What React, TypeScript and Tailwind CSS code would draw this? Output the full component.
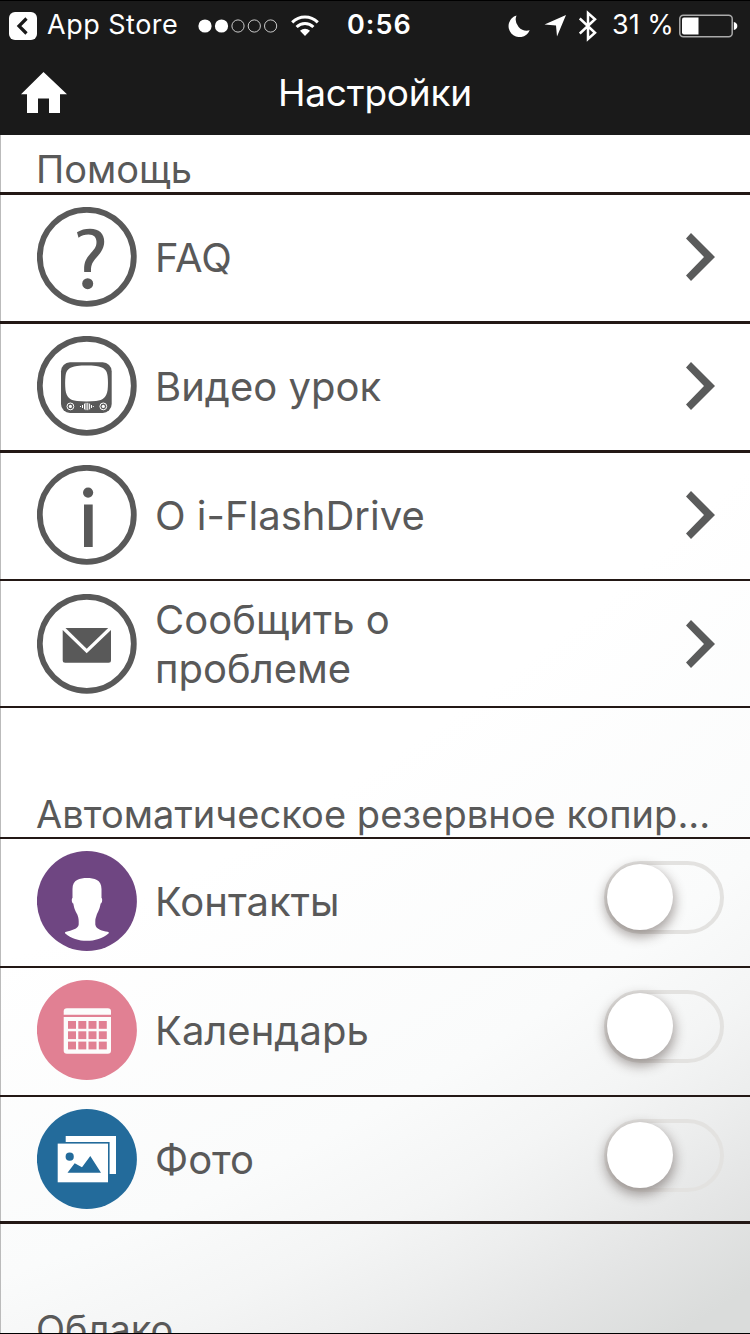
import type { ReactNode } from "react";

const DARK = "#595959";

function Ring({ children }: { children: ReactNode }) {
  return (
    <svg width="100" height="100" viewBox="0 0 100 100" className="shrink-0">
      <circle cx="49.8" cy="49.8" r="47" fill="none" stroke={DARK} strokeWidth="5.8" />
      {children}
    </svg>
  );
}

function Disc({ color, children }: { color: string; children: ReactNode }) {
  return (
    <svg width="100" height="100" viewBox="0 0 100 100" className="shrink-0">
      <circle cx="49.9" cy="50" r="50" fill={color} />
      {children}
    </svg>
  );
}

function FaqIcon() {
  return (
    <Ring>
      <path
        d="M40 25.2C44 22.7 48 21.700 53 21.700C62.500 21.700 67.200 27 67.200 34.500C67.200 41.500 63.500 46 59.500 50.500C55.500 55 53.700 58 54 65H47.200C46.700 56.500 48.500 52.500 52.500 47.800C56.500 43 59.500 40.500 59.500 35C59.500 30.500 57 27.500 51.500 27.500C47.500 27.500 44.500 28.500 41.500 30.700Z"
        fill={DARK}
      />
      <circle cx="50.7" cy="76.7" r="5.5" fill={DARK} />
    </Ring>
  );
}

function VideoIcon() {
  return (
    <Ring>
      <rect x="24" y="26.3" width="50.7" height="50.7" rx="9" fill={DARK} />
      <path
        d="M40 30C46 29.400 53 29.400 59 30C67 31 70 34 70.600 40C71.100 45 71.100 49 70.600 54C69.500 61 66.500 64.300 59 65C53 65.500 46 65.500 40 65C32.500 64.300 29.500 61 28.500 54C28 49 28 45 28.500 40C29.200 34 32 31 40 30Z"
        fill="#fff"
      />
      {[33.4, 66.3].map((x) => (
        <g key={x}>
          <circle cx={x} cy="70.4" r="3.4" fill="none" stroke="#fff" strokeWidth="1" />
          <circle cx={x} cy="70.4" r="1.6" fill="#fff" />
        </g>
      ))}
      <path
        d="M43.500 70v1M45.500 69v3M47.500 67.600v5.800M49 66.800v7.400M50.800 66.800v7.400M52.600 67.600v5.800M54.500 69v3M56.300 70v1"
        stroke="#fff"
        strokeWidth="1"
      />
    </Ring>
  );
}

function InfoIcon() {
  return (
    <Ring>
      <circle cx="51.1" cy="27.6" r="5.1" fill={DARK} />
      <rect x="47" y="39.500" width="8.700" height="42.500" fill={DARK} />
    </Ring>
  );
}

function MailIcon() {
  return (
    <Ring>
      <path d="M28.500 34H71.200L49.700 54.800Z" fill={DARK} />
      <path
        d="M25.700 36L49.700 59.300L74 36V66.200Q74 68.700 71.500 68.700H28.200Q25.700 68.700 25.700 66.200Z"
        fill={DARK}
      />
    </Ring>
  );
}

function ContactsIcon() {
  return (
    <Disc color="#6f4682">
      <path
        d="M50 27C57 27 64.500 28.500 64.500 38V47C65.600 47.500 65.400 52 63.700 52.500C62.500 58.500 61 61 59.800 63.500C59.200 66 58.300 67.500 58.300 70V73.500C59 78.500 66 80 70.500 80.700C72 81 72.200 82 71.500 82.500C60 92.300 39.500 92.300 28.300 82.500C27.500 81.800 28 81 29.300 80.700C34 79.500 41.500 78 41.700 73.500V70C41.700 67.500 41 65.500 40.300 63.500C39 61 37.300 58.500 36.300 52.500C34.600 52 34.400 47.500 35.500 47V38C35.500 28.500 43 27 50 27Z"
        fill="#fff"
      />
    </Disc>
  );
}

function CalendarIcon() {
  return (
    <Disc color="#e18093">
      <path d="M26.700 34.700V31.500Q26.700 28.300 30 28.300H70.800Q74 28.300 74 31.500V34.700Z" fill="#fcfcfc" />
      <path d="M26.700 37H74V70.500Q74 73.700 70.800 73.700H30Q26.700 73.700 26.700 70.500Z" fill="#fcfcfc" />
      {[41, 51.3, 61.6].map((y) =>
        [31, 41.3, 51.5, 61.8].map((x) => (
          <rect key={`${x}-${y}`} x={x} y={y} width="8" height="7.800" fill="#e18093" />
        ))
      )}
    </Disc>
  );
}

function PhotoIcon() {
  return (
    <Disc color="#236b9b">
      <path d="M28.700 27H79V65H72.600V33.100H28.700Z" fill="#fff" />
      <rect x="20.700" y="34.600" width="50.300" height="38.700" fill="#fff" />
      <circle cx="32.700" cy="47.700" r="4.100" fill="#236b9b" />
      <path d="M30.500 63.800L37.700 54.300L45 58.300L53.300 47L64 63.800Z" fill="#236b9b" />
    </Disc>
  );
}

function Chevron() {
  return (
    <svg width="29" height="48" viewBox="0 0 29 48" className="ml-auto mr-[35px] shrink-0">
      <path d="M5 0L29 24L5 48L0 42.500L18 24L0 5.500Z" fill="#5a5b5b" />
    </svg>
  );
}

function Toggle() {
  return (
    <div className="ml-auto mr-[26px] -mt-[7px] h-[73px] w-[120px] shrink-0 rounded-full border-4 border-[#e3e2e0]">
      <div className="-ml-[1.5px] -mt-[1.5px] size-[66px] rounded-full bg-white shadow-[0_5px_12px_2px_rgba(60,45,40,0.42)]" />
    </div>
  );
}

interface RowProps {
  icon: ReactNode;
  label: ReactNode;
  control: ReactNode;
  className: string;
}

function Row({ icon, label, control, className }: RowProps) {
  return (
    <div className={`border-[#231815] pl-[37px] ${className}`}>
      <div className="flex h-[100px] items-center">
        {icon}
        <span className="ml-[18px] whitespace-nowrap text-[40px] leading-[49px]">{label}</span>
        {control}
      </div>
    </div>
  );
}

function StatusBar() {
  return (
    <div className="flex h-[50px] items-center border-t border-black text-[27px]">
      <svg width="28" height="28" viewBox="0 0 28 28" className="ml-[9px]">
        <rect width="28" height="28" rx="6" fill="#fff" />
        <path d="M17.500 6.500L10 14L17.500 21.500" fill="none" stroke="#1a1a1a" strokeWidth="3.200" />
      </svg>
      <span className="ml-[10px] w-[151px] whitespace-nowrap tracking-[0.5px]">App Store</span>
      <svg width="80" height="14" viewBox="0 0 80 14">
        <circle cx="7" cy="7" r="6.600" fill="#fff" />
        <circle cx="23.500" cy="7" r="6.600" fill="#fff" />
        {[40, 56.3, 72.6].map((x) => (
          <circle key={x} cx={x} cy="7" r="6.100" fill="none" stroke="#ddd" strokeWidth="0.900" />
        ))}
      </svg>
      <svg width="28" height="22" viewBox="0 0 28 22" className="ml-[13px]">
        <path d="M1.200 7.300C8.500 0.200 19.500 0.200 26.800 7.300" fill="none" stroke="#fff" strokeWidth="3" />
        <path d="M5.600 12C10.500 7.200 17.500 7.200 22.400 12" fill="none" stroke="#fff" strokeWidth="3" />
        <path d="M9 15.700C12 13 16 13 19 15.700L14 21Z" fill="#fff" />
      </svg>
      <span className="ml-[28px] w-[161px] whitespace-nowrap font-semibold tracking-[1px]">0:56</span>
      <svg width="22" height="22" viewBox="0 0 22 22">
        <path d="M8.500 0.500A11 11 0 1 0 21.700 15.300A11.200 11.200 0 0 1 8.500 0.500Z" fill="#fff" />
      </svg>
      <svg width="22" height="22" viewBox="0 0 22 22" className="ml-[14px]">
        <path d="M22 0L13 21.500L12 10.500L0.500 9.500Z" fill="#fff" />
      </svg>
      <svg width="18" height="32" viewBox="0 0 18 32" className="ml-[13px]">
        <path d="M0.800 8.500L16 22.800L9 29V3L16 9.200L0.800 23.500" fill="none" stroke="#fff" strokeWidth="2.500" />
      </svg>
      <span className="ml-[15px] w-[67px] whitespace-nowrap">31 %</span>
      <svg width="59" height="24" viewBox="0 0 59 24">
        <rect x="0.800" y="1.300" width="52.400" height="21.400" rx="3.500" fill="none" stroke="#aaa" strokeWidth="1.500" />
        <path d="M5 3.500H19.500V20.500H5Q3 20.500 3 18.500V5.500Q3 3.500 5 3.500Z" fill="#fff" />
        <path d="M54.800 8C59.500 8.500 59.500 15.500 54.800 16Z" fill="#fff" />
      </svg>
    </div>
  );
}

export default function App() {
  return (
    <div className="flex h-[1334px] w-[750px] flex-col overflow-hidden bg-[radial-gradient(circle_2957px_at_-859px_-1147px,#ffffff_77%,#fafbfb_87%,#f4f5f5_90.5%,#edeeee_93%,#e4e5e5_95.7%,#dadcdb_98.7%)] font-['Inter','Liberation_Sans',sans-serif] text-[#595959]">
      <header className="h-[135px] shrink-0 bg-[#1a1a1a] text-white">
        <StatusBar />
        <div className="grid h-[85px] grid-cols-[1fr_auto_1fr] items-center">
          <svg width="46" height="41" viewBox="0 0 46 41" className="ml-[21px]">
            <path d="M22.500 0L46 22.300H39V41H28V26.500H17V41H6V22.300H0Z" fill="#fff" />
          </svg>
          <h1 className="whitespace-nowrap text-[37px] tracking-[-0.2px]">Настройки</h1>
        </div>
      </header>

      <main className="min-h-0 flex-1 overflow-hidden bg-[linear-gradient(#bbbbbb,#bbbbbb)] bg-[length:1px_100%] bg-no-repeat">
        <h2 className="h-[60px] border-b-3 border-[#231815] pl-9 pt-[11px] text-[38px] leading-[46px]">
          Помощь
        </h2>
        <Row className="h-[129px] border-b-3 pt-3" icon={<FaqIcon />} label="FAQ" control={<Chevron />} />
        <Row className="h-[129px] border-b-3 pt-3" icon={<VideoIcon />} label="Видео урок" control={<Chevron />} />
        <Row className="h-[128px] border-b-2 pt-3" icon={<InfoIcon />} label="О i-FlashDrive" control={<Chevron />} />
        <Row
          className="h-[127px] border-b-2 pt-[13px]"
          icon={<MailIcon />}
          label={
            <>
              Сообщить о
              <br />
              проблеме
            </>
          }
          control={<Chevron />}
        />

        <h2 className="h-[131px] whitespace-nowrap border-b-2 border-[#231815] pl-9 pt-[83px] text-[38px] leading-[46px] tracking-[0.05px]">
          Автоматическое резервное копир...
        </h2>
        <Row className="h-[129px] border-b-2 pt-3" icon={<ContactsIcon />} label="Контакты" control={<Toggle />} />
        <Row className="h-[129px] border-b-2 pt-3" icon={<CalendarIcon />} label="Календарь" control={<Toggle />} />
        <Row className="h-[127px] border-b-3 pt-3" icon={<PhotoIcon />} label="Фото" control={<Toggle />} />

        <h2 className="h-[110px] overflow-hidden border-b border-black pl-9 pt-[82px] text-[38px] leading-[46px]">
          Облако
        </h2>
      </main>
    </div>
  );
}
